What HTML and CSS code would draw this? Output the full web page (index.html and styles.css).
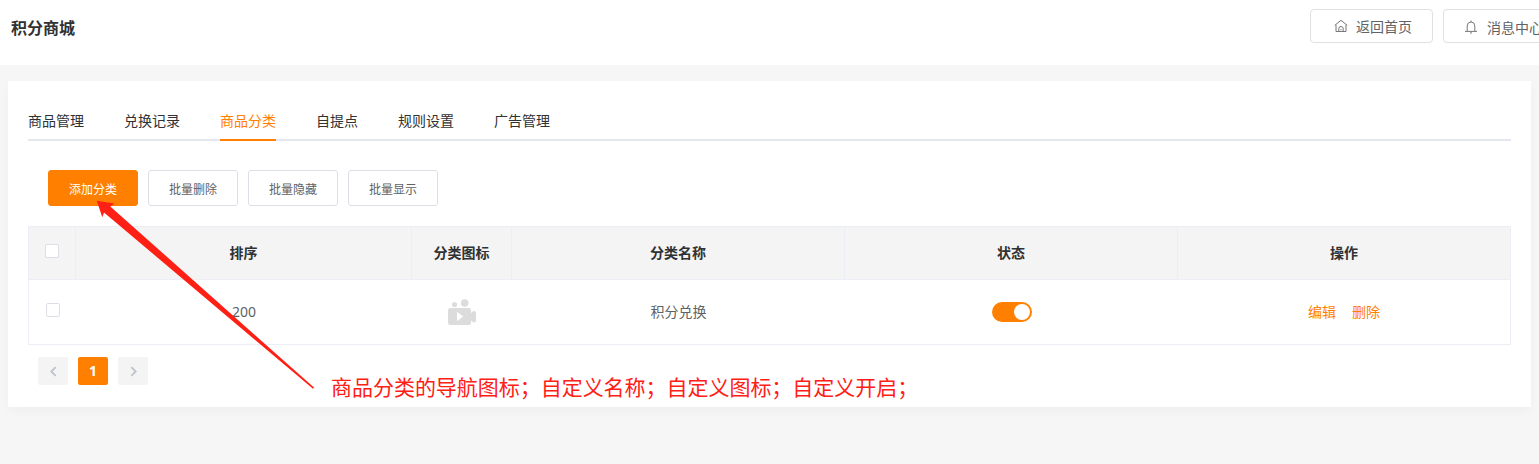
FILE: index.html
```html
<!DOCTYPE html>
<html lang="zh-CN">
<head>
    <meta charset="UTF-8">
    <title>积分商城</title>
    <link rel="stylesheet" href="styles.css">
</head>
<body>
    <div class="header">
        <h1 class="header-title">积分商城</h1>
        <div class="header-actions">
            <button class="header-btn">
                <svg class="header-icon" viewBox="0 0 14 14">
                    <path d="M0.8 6.3 L7 1.3 L13.2 6.3 M2 5.8 V12.5 H12 V5.8 M4.8 12.3 V9.5 Q4.8 7.5 7 7.5 Q9.2 7.5 9.2 9.5 V12.3 M7 10 V11.2"/>
                </svg>
                <span>返回首页</span>
            </button>
            <button class="header-btn header-btn-msg">
                <svg class="header-icon" viewBox="0 0 14 14">
                    <path d="M7 0.5 V2 M3.2 11.2 V6 Q3.2 2 7 2 Q10.8 2 10.8 6 V11.2 M1 11.4 H13 M6 12.9 H8"/>
                </svg>
                <span>消息中心</span>
            </button>
        </div>
    </div>

    <div class="card">
        <div class="tabs">
            <a class="tab">商品管理</a>
            <a class="tab">兑换记录</a>
            <a class="tab active">商品分类</a>
            <a class="tab">自提点</a>
            <a class="tab">规则设置</a>
            <a class="tab">广告管理</a>
        </div>

        <div class="toolbar">
            <button class="btn btn-primary">添加分类</button>
            <button class="btn">批量删除</button>
            <button class="btn">批量隐藏</button>
            <button class="btn">批量显示</button>
        </div>

        <table class="table">
            <colgroup>
                <col class="col-check">
                <col class="col-sort">
                <col class="col-icon">
                <col class="col-wide">
                <col class="col-wide">
                <col class="col-wide">
            </colgroup>
            <thead>
                <tr>
                    <th><span class="checkbox"></span></th>
                    <th>排序</th>
                    <th>分类图标</th>
                    <th>分类名称</th>
                    <th>状态</th>
                    <th>操作</th>
                </tr>
            </thead>
            <tbody>
                <tr>
                    <td><span class="checkbox"></span></td>
                    <td>200</td>
                    <td class="media">
                        <svg class="video-icon" viewBox="0 0 28 26">
                            <circle cx="6.5" cy="5.5" r="2.6"/>
                            <circle cx="16.7" cy="4" r="3.8"/>
                            <rect x="0" y="9" width="23" height="17" rx="2.5"/>
                            <path d="M22 15 L25 12.2 Q28 11.5 28 14 V21.5 Q28 24 25 23.3 L22 20.5 Z"/>
                            <path class="play" d="M9 12.8 L15.2 17.5 L9 22.2 Z"/>
                        </svg>
                    </td>
                    <td>积分兑换</td>
                    <td class="media"><span class="switch"></span></td>
                    <td>
                        <div class="links">
                            <a>编辑</a>
                            <a>删除</a>
                        </div>
                    </td>
                </tr>
            </tbody>
        </table>

        <div class="pagination">
            <button class="page">
                <svg class="chevron" viewBox="0 0 8 10"><path d="M6 1 L2 5 L6 9"/></svg>
            </button>
            <button class="page current">1</button>
            <button class="page">
                <svg class="chevron" viewBox="0 0 8 10"><path d="M2 1 L6 5 L2 9"/></svg>
            </button>
        </div>
    </div>

    <!-- red note over the page -->
    <svg class="arrow" viewBox="0 0 220 190">
        <path d="M0.7 0.7 L18.5 3.5 L14.3 6.5 L218 187.5 L217 188.7 L8 12.5 L6.3 17.3 Z"/>
    </svg>
    <p class="note">商品分类的导航图标；自定义名称；自定义图标；自定义开启；</p>
</body>
</html>
```
FILE: styles.css
```css
* {
    margin: 0;
    padding: 0;
    box-sizing: border-box;
}

body {
    background: #f6f6f6;
    font-family: "Noto Sans", "Noto Sans CJK SC", sans-serif;
    font-size: 14px;
    color: #606266;
    height: 464px;
    position: relative;
    overflow: hidden;
}

button {
    font-family: inherit;
    cursor: pointer;
}

.header {
    background: #fff;
    height: 65px;
    padding: 9px 0 0 11px;
    display: flex;
    justify-content: space-between;
    align-items: flex-start;
}

.header-title {
    font-size: 16px;
    line-height: 39px;
    color: #303133;
}

.header-actions {
    display: flex;
    gap: 10px;
    width: 229px;
}

.header-btn {
    flex: none;
    display: flex;
    align-items: center;
    gap: 8px;
    width: 123px;
    height: 34px;
    padding-left: 23px;
    background: #fff;
    border: 1px solid #e0e0e0;
    border-radius: 4px;
    font-size: 14px;
    color: #606266;
}

.header-btn-msg {
    padding-left: 20px;
    padding-top: 2px;
    gap: 9px;
}

.header-icon {
    width: 14px;
    height: 14px;
    fill: none;
    stroke: #777;
    stroke-width: 1;
}

.card {
    margin: 16px 8px 0;
    height: 326px;
    padding: 20px;
    background: #fff;
    box-shadow: 0 4px 10px rgba(0, 0, 0, 0.03);
}

.tabs {
    display: flex;
    gap: 40px;
    height: 40px;
    border-bottom: 2px solid #e4e7ed;
}

.tab {
    height: 40px;
    line-height: 40px;
    color: #303133;
}

.tab.active {
    color: #ff8000;
    border-bottom: 2px solid #ff8000;
}

.toolbar {
    display: flex;
    gap: 10px;
    padding: 29px 20px 20px;
}

.btn {
    width: 90px;
    height: 36px;
    padding-top: 2px;
    background: #fff;
    border: 1px solid #dcdfe6;
    border-radius: 3px;
    font-size: 12px;
    color: #606266;
}

.btn-primary {
    background: #ff8000;
    border-color: #ff8000;
    color: #fff;
}

.table {
    width: 100%;
    table-layout: fixed;
    border-collapse: separate;
    border-spacing: 0;
    border: solid #ebeef5;
    border-width: 1px 0 0 1px;
    text-align: center;
}

.col-check {
    width: 47px;
}

.col-sort {
    width: 336px;
}

.col-icon {
    width: 100px;
}

.col-wide {
    width: 333px;
}

.table th {
    height: 53px;
    padding-bottom: 2px;
    background: #f4f4f4;
    border: solid #ebeef5;
    border-width: 0 1px 1px 0;
    color: #303133;
}

.table td {
    height: 65px;
    padding-bottom: 2px;
    border-bottom: 1px solid #ebeef5;
}

.table .media {
    padding-bottom: 0;
}

.table td:last-child {
    border-right: 1px solid #ebeef5;
}

.checkbox {
    display: block;
    width: 14px;
    height: 14px;
    margin: 0 auto 3px;
    background: #fff;
    border: 1px solid #dcdfe6;
    border-radius: 2px;
}

.video-icon {
    display: block;
    width: 28px;
    height: 26px;
    margin: 0 auto;
    fill: #dcdcdc;
}

.video-icon .play {
    fill: #fff;
}

.switch {
    display: flex;
    justify-content: flex-end;
    width: 40px;
    height: 20px;
    margin: 0 auto;
    padding: 2px;
    background: #ff8000;
    border-radius: 10px;
}

.switch::after {
    content: "";
    width: 16px;
    height: 16px;
    background: #fff;
    border-radius: 50%;
}

.links {
    display: flex;
    justify-content: center;
    gap: 16px;
    color: #ff8000;
}

.pagination {
    display: flex;
    gap: 10px;
    padding: 12px 10px 0;
}

.page {
    display: flex;
    align-items: center;
    justify-content: center;
    width: 30px;
    height: 28px;
    background: #f4f4f5;
    border: none;
    border-radius: 2px;
}

.page.current {
    padding-bottom: 1px;
    background: #ff8000;
    color: #fff;
    font-size: 14px;
    font-weight: bold;
}

.chevron {
    width: 9px;
    height: 11px;
    fill: none;
    stroke: #c0c4cc;
    stroke-width: 1.7;
}

.arrow {
    position: absolute;
    left: 96px;
    top: 200px;
    width: 220px;
    height: 190px;
    fill: #ff2015;
}

.note {
    position: absolute;
    left: 331px;
    top: 372px;
    font-size: 21px;
    line-height: 31px;
    letter-spacing: -0.03px;
    white-space: nowrap;
    color: #ff2015;
}
```
